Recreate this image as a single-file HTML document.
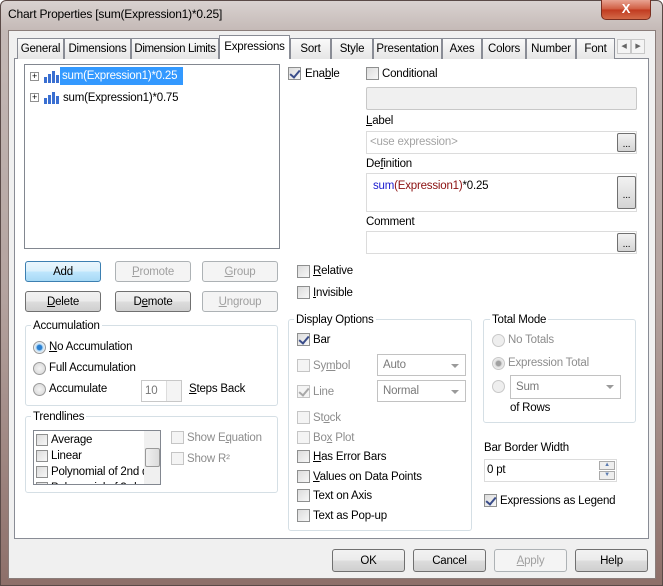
<!DOCTYPE html>
<html><head><meta charset="utf-8"><style>
*{box-sizing:border-box;margin:0;padding:0}
body{width:663px;height:586px;overflow:hidden;font-family:"Liberation Sans",sans-serif;font-size:11.5px;line-height:16px;letter-spacing:-0.2px;color:#000;background:#fff;position:relative}
.a{position:absolute;white-space:nowrap}
.frame{left:0;top:0;width:663px;height:586px;background:linear-gradient(180deg,#d9d2d0 0,#c4b9b6 30px,#b3a29e 300px,#8d6f69 586px);border:1px solid #5a4a47;border-radius:6px 6px 0 0}
.client{left:8px;top:30px;width:648px;height:549px;background:#f0f0f0;border:1px solid #8a7d7a}
.tab{top:38px;height:21px;background:linear-gradient(#fafafa,#e6e6e6);border:1px solid #898c95;border-bottom:none;padding:2px 0 0;text-align:center}
.page{left:14px;top:58px;width:635px;height:481px;background:#fff;border:1px solid #898c95}
.cb{width:13px;height:13px;border:1px solid #8e8f8f;background:linear-gradient(135deg,#dcdcdc,#f7f7f7)}
.cb.d{border-color:#c5c5c5;background:#f4f4f4}
.ck::after{content:"";position:absolute;left:3px;top:0px;width:4px;height:8px;border:solid #3a4d8a;border-width:0 2px 2px 0;transform:rotate(40deg)}
.ck.d::after{border-color:#a8a8a8}
.rb{width:13px;height:13px;border-radius:50%;border:1px solid #9a9a9a;background:radial-gradient(#f4f4f4,#d4d4d4)}
.rb.d{border-color:#c8c8c8;background:#eee}
.btn{height:21px;border:1px solid #707070;border-radius:3px;background:linear-gradient(#f2f2f2 0,#ebebeb 50%,#dddddd 51%,#cfcfcf);text-align:center;padding-top:2px}
.btn.d{border-color:#adb2b5;background:#f4f4f4;color:#a0a0a0}
.btn.p{border-color:#3c7fb1;background:linear-gradient(#eaf6fd 0,#d9f0fc 50%,#bee6fd 51%,#a7d9f5)}
.grp{border:1px solid #d5dfe5;border-radius:3px}
.gl{background:#fff;padding:0 2px}
.box{border:1px solid #abadb3;background:#fff}
.dis{color:#8d8d8d}
.dd{border:1px solid #c2c2c2;background:#fff;color:#7a7a7a;padding:2px 5px;height:22px}
.dd::after{content:"";position:absolute;right:6px;top:9px;border:4px solid transparent;border-top:4px solid #9a9a9a}
.eb{width:19px;height:19px;border:1px solid #707070;border-radius:2px;background:linear-gradient(#f2f2f2,#d4d4d4);font-size:10px;text-align:center;line-height:22px}
u{text-decoration:underline}
</style></head><body>
<div class="a frame"></div>
<div class="a" style="left:8px;top:6px;font-size:12px">Chart Properties [sum(Expression1)*0.25]</div>
<div class="a" style="left:601px;top:0;width:50px;height:20px;background:linear-gradient(#e8a493,#cf5a3e 50%,#c0391f 51%,#d36a48);border:1px solid #7a2e20;border-top:none;border-radius:0 0 5px 5px;color:#fff;font-weight:bold;text-align:center;font-size:13px;line-height:18px">X</div>
<div class="a client"></div>
<div class="a page"></div>
<div class="a tab" style="left:17px;width:47px">General</div>
<div class="a tab" style="left:64px;width:67px">Dimensions</div>
<div class="a tab" style="left:131px;width:88px;letter-spacing:-0.4px">Dimension Limits</div>
<div class="a tab" style="left:219px;top:35px;height:24px;width:71px;background:#fff;padding-top:3px">Expressions</div>
<div class="a tab" style="left:290px;width:41px">Sort</div>
<div class="a tab" style="left:331px;width:42px">Style</div>
<div class="a tab" style="left:373px;width:69px">Presentation</div>
<div class="a tab" style="left:442px;width:40px">Axes</div>
<div class="a tab" style="left:482px;width:44px">Colors</div>
<div class="a tab" style="left:526px;width:50px">Number</div>
<div class="a tab" style="left:576px;width:39px">Font</div>
<div class="a" style="left:617px;top:39px;width:14px;height:15px;border:1px solid #c8c8c8;background:#f4f4f4;font-size:7px;text-align:center;line-height:14px;color:#666">◀</div>
<div class="a" style="left:631px;top:39px;width:14px;height:15px;border:1px solid #c8c8c8;background:#f4f4f4;font-size:7px;text-align:center;line-height:14px;color:#666">▶</div>

<div class="a box" style="left:24px;top:64px;width:256px;height:185px;border-color:#828790"></div>
<div class="a" style="left:30px;top:72px;width:9px;height:9px;border:1px solid #919191;font-size:9px;line-height:7px;text-align:center;background:#fff">+</div>
<div class="a" style="left:30px;top:93px;width:9px;height:9px;border:1px solid #919191;font-size:9px;line-height:7px;text-align:center;background:#fff">+</div>
<svg class="a" style="left:43px;top:70px" width="16" height="13"><rect x="1" y="7" width="3" height="6" fill="#3a6fd1"/><rect x="5" y="4" width="3" height="9" fill="#3a6fd1"/><rect x="9" y="1" width="3" height="12" fill="#3a6fd1"/><rect x="13" y="5" width="3" height="8" fill="#3a6fd1"/></svg>
<svg class="a" style="left:43px;top:91px" width="16" height="13"><rect x="1" y="7" width="3" height="6" fill="#3a6fd1"/><rect x="5" y="4" width="3" height="9" fill="#3a6fd1"/><rect x="9" y="1" width="3" height="12" fill="#3a6fd1"/><rect x="13" y="5" width="3" height="8" fill="#3a6fd1"/></svg>
<div class="a" style="left:60px;top:67px;width:123px;height:18px;background:#3399ff;color:#fff;padding:1px 2px;overflow:hidden">sum(Expression1)*0.25</div>
<div class="a" style="left:63px;top:90px">sum(Expression1)*0.75</div>

<div class="a cb ck" style="left:288px;top:67px"></div><div class="a" style="left:305px;top:66px">Ena<u>b</u>le</div>
<div class="a cb" style="left:366px;top:67px"></div><div class="a" style="left:382px;top:66px">Conditional</div>
<div class="a" style="left:366px;top:87px;width:271px;height:23px;border:1px solid #c8c8c8;background:#f0f0f0;border-radius:2px"></div>
<div class="a" style="left:366px;top:113px"><u>L</u>abel</div>
<div class="a box" style="left:366px;top:131px;width:271px;height:23px;border-color:#dcdcdc;color:#a4a4a4;padding:2px 3px">&lt;use expression&gt;</div>
<div class="a eb" style="left:617px;top:133px">...</div>
<div class="a" style="left:366px;top:156px">De<u>f</u>inition</div>
<div class="a box" style="left:366px;top:173px;width:271px;height:39px;border-color:#dcdcdc;padding:4px 6px"><span style="color:#2020d0">sum</span><span style="color:#8b1010">(Expression1)</span>*0.25</div>
<div class="a eb" style="left:617px;top:176px;height:33px;line-height:38px">...</div>
<div class="a" style="left:366px;top:214px">Comment</div>
<div class="a box" style="left:366px;top:231px;width:271px;height:23px;border-color:#dcdcdc"></div>
<div class="a eb" style="left:617px;top:233px">...</div>

<div class="a btn p" style="left:25px;top:261px;width:76px">Add</div>
<div class="a btn d" style="left:115px;top:261px;width:76px"><u>P</u>romote</div>
<div class="a btn d" style="left:202px;top:261px;width:76px"><u>G</u>roup</div>
<div class="a btn" style="left:25px;top:291px;width:76px"><u>D</u>elete</div>
<div class="a btn" style="left:115px;top:291px;width:76px">D<u>e</u>mote</div>
<div class="a btn d" style="left:202px;top:291px;width:76px"><u>U</u>ngroup</div>
<div class="a cb" style="left:297px;top:265px"></div><div class="a" style="left:313px;top:263px"><u>R</u>elative</div>
<div class="a cb" style="left:297px;top:286px"></div><div class="a" style="left:313px;top:285px"><u>I</u>nvisible</div>

<div class="a grp" style="left:25px;top:325px;width:253px;height:81px"></div>
<div class="a gl" style="left:31px;top:318px">Accumulation</div>
<div class="a rb" style="left:33px;top:341px;background:radial-gradient(#2a7fd0 30%,#bfe0f8 45%,#f0f0f0 70%)"></div><div class="a" style="left:49px;top:339px"><u>N</u>o Accumulation</div>
<div class="a rb" style="left:33px;top:362px"></div><div class="a" style="left:49px;top:360px">Full Accumulation</div>
<div class="a rb" style="left:33px;top:383px"></div><div class="a" style="left:49px;top:381px">Accumulate</div>
<div class="a" style="left:141px;top:380px;width:41px;height:22px;border:1px solid #c8c8c8;color:#777;padding:2px 3px">10</div>
<div class="a" style="left:166px;top:381px;width:15px;height:20px;border-left:1px solid #ddd;background:#f4f4f4"></div>
<div class="a" style="left:189px;top:381px"><u>S</u>teps Back</div>

<div class="a grp" style="left:25px;top:416px;width:253px;height:77px"></div>
<div class="a gl" style="left:31px;top:409px">Trendlines</div>
<div class="a" style="left:33px;top:430px;width:128px;height:55px;border:1px solid #828790;overflow:hidden;background:#fff">
 <div class="a cb" style="left:2px;top:3px;width:12px;height:12px"></div><div class="a" style="left:17px;top:1px">Average</div>
 <div class="a cb" style="left:2px;top:19px;width:12px;height:12px"></div><div class="a" style="left:17px;top:17px">Linear</div>
 <div class="a cb" style="left:2px;top:35px;width:12px;height:12px"></div><div class="a" style="left:17px;top:33px">Polynomial of 2nd d</div>
 <div class="a cb" style="left:2px;top:51px;width:12px;height:12px"></div><div class="a" style="left:17px;top:49px">Polynomial of 3rd d</div>
 <div class="a" style="left:110px;top:0;width:17px;height:55px;background:#f0f0f0"></div>
 <div class="a" style="left:111px;top:17px;width:15px;height:19px;border:1px solid #999;border-radius:2px;background:linear-gradient(90deg,#f0f0f0,#dcdcdc)"></div>
</div>
<div class="a cb d" style="left:171px;top:431px"></div><div class="a dis" style="left:187px;top:430px">Show E<u>q</u>uation</div>
<div class="a cb d" style="left:171px;top:452px"></div><div class="a dis" style="left:187px;top:451px">Show R²</div>

<div class="a grp" style="left:288px;top:319px;width:184px;height:212px"></div>
<div class="a gl" style="left:294px;top:312px">Display Options</div>
<div class="a cb ck" style="left:297px;top:333px"></div><div class="a" style="left:313px;top:332px">Bar</div>
<div class="a cb d" style="left:297px;top:359px"></div><div class="a dis" style="left:313px;top:358px">Sy<u>m</u>bol</div>
<div class="a dd" style="left:377px;top:354px;width:89px">Auto</div>
<div class="a cb d ck" style="left:297px;top:385px"></div><div class="a dis" style="left:313px;top:384px">Line</div>
<div class="a dd" style="left:377px;top:380px;width:89px">Normal</div>
<div class="a cb d" style="left:297px;top:411px"></div><div class="a dis" style="left:313px;top:410px">St<u>o</u>ck</div>
<div class="a cb d" style="left:297px;top:431px"></div><div class="a dis" style="left:313px;top:430px">Bo<u>x</u> Plot</div>
<div class="a cb" style="left:297px;top:450px"></div><div class="a" style="left:313px;top:449px"><u>H</u>as Error Bars</div>
<div class="a cb" style="left:297px;top:470px"></div><div class="a" style="left:313px;top:469px"><u>V</u>alues on Data Points</div>
<div class="a cb" style="left:297px;top:489px"></div><div class="a" style="left:313px;top:488px">Text on Axis</div>
<div class="a cb" style="left:297px;top:509px"></div><div class="a" style="left:313px;top:508px">Text as Pop-up</div>

<div class="a grp" style="left:483px;top:319px;width:153px;height:104px"></div>
<div class="a gl" style="left:490px;top:312px">Total Mode</div>
<div class="a rb d" style="left:492px;top:334px"></div><div class="a dis" style="left:508px;top:332px">No Totals</div>
<div class="a rb d" style="left:492px;top:357px;background:radial-gradient(#a0a0a0 30%,#e0e0e0 45%,#eee 70%)"></div><div class="a dis" style="left:508px;top:355px">Expression Total</div>
<div class="a rb d" style="left:492px;top:380px"></div>
<div class="a dd" style="left:510px;top:375px;width:111px;height:24px;padding-top:3px">Sum</div>
<div class="a" style="left:510px;top:400px">of Rows</div>
<div class="a" style="left:484px;top:440px">Bar Border Width</div>
<div class="a box" style="left:484px;top:459px;width:133px;height:23px;padding:2px 2px;border-color:#dcdcdc">0 pt</div>
<div class="a" style="left:599px;top:461px;width:16px;height:9px;border:1px solid #aaa;background:#eee;font-size:6px;text-align:center;line-height:7px;color:#5a7ab0">▲</div>
<div class="a" style="left:599px;top:471px;width:16px;height:9px;border:1px solid #aaa;background:#eee;font-size:6px;text-align:center;line-height:7px;color:#5a7ab0">▼</div>
<div class="a cb ck" style="left:484px;top:494px"></div><div class="a" style="left:500px;top:493px">Expressions as Legend</div>

<div class="a btn" style="left:332px;top:549px;width:73px;height:23px;padding-top:3px">OK</div>
<div class="a btn" style="left:413px;top:549px;width:73px;height:23px;padding-top:3px">Cancel</div>
<div class="a btn d" style="left:494px;top:549px;width:73px;height:23px;padding-top:3px"><u>A</u>pply</div>
<div class="a btn" style="left:575px;top:549px;width:73px;height:23px;padding-top:3px">Help</div>
</body></html>
